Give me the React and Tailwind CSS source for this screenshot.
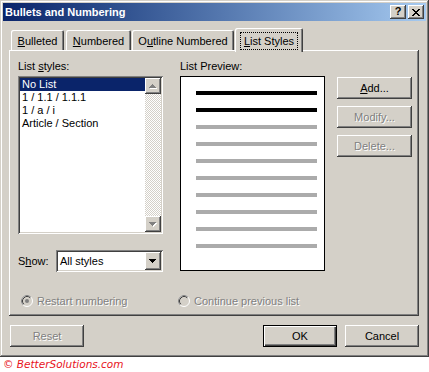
const raised =
  "shadow-[inset_-1px_-1px_#404040,inset_1px_1px_#ffffff,inset_-2px_-2px_#808080]";
const sunken =
  "shadow-[inset_1px_1px_#808080,inset_-1px_-1px_#ffffff,inset_2px_2px_#404040,inset_-2px_-2px_#d4d0c8]";
const disabledText = "text-[#808080] [text-shadow:1px_1px_0_#ffffff]";

function Arrow({ dir = "down", color = "#000000", shadow = false }) {
  const rows = dir === "up" ? [[3, 1], [2, 3], [1, 5], [0, 7]] : [[0, 7], [1, 5], [2, 3], [3, 1]];
  return (
    <svg width="8" height="5" viewBox="0 0 8 5" shapeRendering="crispEdges">
      {shadow &&
        rows.map(([x, w], i) => <rect key={"s" + i} x={x + 1} y={i + 1} width={w} height="1" fill="#ffffff" />)}
      {rows.map(([x, w], i) => (
        <rect key={i} x={x} y={i} width={w} height="1" fill={color} />
      ))}
    </svg>
  );
}

function Radio({ checked }) {
  return (
    <svg width="12" height="12" viewBox="0 0 12 12">
      <circle cx="6" cy="6" r="5.5" fill="#d4d0c8" stroke="#ffffff" />
      <path d="M2.11 9.89 A5.5 5.5 0 0 1 9.89 2.11" fill="none" stroke="#808080" />
      <path d="M2.82 9.18 A4.5 4.5 0 0 1 9.18 2.82" fill="none" stroke="#404040" />
      {checked && <circle cx="6" cy="6" r="2" fill="#808080" />}
    </svg>
  );
}

function Button({ children, className = "", disabled, isDefault }) {
  const frame = isDefault
    ? "shadow-[inset_0_0_0_1px_#000000,inset_2px_2px_#ffffff,inset_-2px_-2px_#404040,inset_-3px_-3px_#808080]"
    : raised;
  return (
    <div
      className={`h-[22px] w-[74px] flex items-center justify-center bg-[#d4d0c8] ${frame} ${
        disabled ? disabledText : "text-black"
      } ${className}`}
    >
      {children}
    </div>
  );
}

function Tab({ children, width, selected, className = "" }) {
  return (
    <div
      className={`flex justify-center bg-[#d4d0c8] rounded-t-[2px] shadow-[inset_1px_1px_#ffffff,inset_-1px_0_#404040,inset_-2px_0_#808080] ${
        selected ? "relative z-10 h-[24px] mb-[-2px] pt-[4px]" : "h-[20px] pt-[5px]"
      } ${className}`}
      style={{ width }}
    >
      {children}
    </div>
  );
}

export default function App() {
  const styles = ["No List", "1 / 1.1 / 1.1.1", "1 / a / i", "Article / Section"];
  return (
    <div className="w-[429px] h-[372px] bg-white font-['Liberation_Sans',Arial,sans-serif] text-[11px] leading-[13px] text-black overflow-hidden">
      <div className="w-[429px] h-[357px] bg-[#d4d0c8] p-[3px] flex flex-col shadow-[inset_-1px_-1px_#404040,inset_1px_1px_#d4d0c8,inset_-2px_-2px_#808080,inset_2px_2px_#ffffff]">
        {/* title bar */}
        <div className="h-[18px] flex items-center bg-linear-to-r from-[#0a246a] to-[#a6caf0] pl-[2px] pr-[2px]">
          <span className="text-white font-bold text-[11px]">Bullets and Numbering</span>
          <div className="flex-1" />
          <div className={`w-[16px] h-[14px] flex items-center justify-center bg-[#d4d0c8] ${raised} font-bold text-[11px] leading-none pb-[1px]`}>
            ?
          </div>
          <div className={`ml-[2px] w-[16px] h-[14px] flex items-center justify-center bg-[#d4d0c8] ${raised}`}>
            <svg width="8" height="7" viewBox="0 0 8 7" shapeRendering="crispEdges">
              {[0, 1, 2, 3, 4, 5, 6].map((i) => (
                <g key={i}>
                  <rect x={i} y={i} width="2" height="1" fill="#000" />
                  <rect x={6 - i} y={i} width="2" height="1" fill="#000" />
                </g>
              ))}
            </svg>
          </div>
        </div>

        {/* tabs */}
        <div className="mt-[7px] ml-[8px] h-[22px] flex items-end">
          <Tab width={53}>
            <span><u>B</u>ulleted</span>
          </Tab>
          <Tab width={65} className="ml-[2px]">
            <span><u>N</u>umbered</span>
          </Tab>
          <Tab width={102} className="ml-[1px]">
            <span>O<u>u</u>tline Numbered</span>
          </Tab>
          <Tab width={68} selected className="ml-[1px]">
            <span className="h-[18px] px-[3px] pt-[2px] border border-dotted border-black">
              <u>L</u>ist Styles
            </span>
          </Tab>
        </div>

        {/* panel */}
        <div className={`ml-[6px] w-[410px] h-[266px] pl-[9px] pt-[10px] pr-[7px] flex flex-col ${raised}`}>
          <div className="flex">
            {/* list styles */}
            <div className="w-[145px] flex flex-col">
              <div className="h-[13px]">
                List <u>s</u>tyles:
              </div>
              <div className={`mt-[3px] h-[158px] bg-white p-[2px] flex ${sunken}`}>
                <div className="flex-1 flex flex-col">
                  {styles.map((s, i) => (
                    <div
                      key={s}
                      className={`h-[13px] pl-[2px] ${i === 0 ? "bg-[#0a246a] text-white" : ""}`}
                    >
                      {s}
                    </div>
                  ))}
                </div>
                <div className="w-[16px] flex flex-col">
                  <div className={`h-[16px] flex items-center justify-center bg-[#d4d0c8] ${raised}`}>
                    <Arrow dir="up" color="#808080" shadow />
                  </div>
                  <div className="flex-1 bg-[repeating-conic-gradient(#d4d0c8_0%_25%,#ffffff_0%_50%)] bg-[length:2px_2px]" />
                  <div className={`h-[16px] flex items-center justify-center bg-[#d4d0c8] ${raised}`}>
                    <Arrow dir="down" color="#808080" shadow />
                  </div>
                </div>
              </div>
              <div className="mt-[16px] h-[22px] flex items-center">
                <span className="w-[38px]">
                  S<u>h</u>ow:
                </span>
                <div className={`flex-1 h-[22px] bg-white p-[2px] flex ${sunken}`}>
                  <div className="flex-1 flex items-center pl-[2px]">All styles</div>
                  <div className={`w-[16px] flex items-center justify-center bg-[#d4d0c8] ${raised}`}>
                    <Arrow dir="down" />
                  </div>
                </div>
              </div>
            </div>

            {/* preview */}
            <div className="ml-[17px] w-[145px] flex flex-col">
              <div className="h-[13px]">List Preview:</div>
              <div className="mt-[3px] h-[195px] bg-white border border-black pt-[14px] pl-[15px] pr-[7px] flex flex-col">
                <div className="h-[4px] bg-black" />
                <div className="mt-[13px] h-[4px] bg-black" />
                {[0, 1, 2, 3, 4, 5, 6, 7].map((i) => (
                  <div key={i} className="mt-[13px] h-[4px] bg-[#ababab]" />
                ))}
              </div>
            </div>

            {/* buttons */}
            <div className="ml-[12px] pt-[17px] flex flex-col gap-[7px]">
              <Button className="w-[75px]">
                <span><u>A</u>dd...</span>
              </Button>
              <Button className="w-[75px]" disabled>
                Modify...
              </Button>
              <Button className="w-[75px]" disabled>
                Delete...
              </Button>
            </div>
          </div>

          {/* radios */}
          <div className="mt-[22px] h-[14px] flex items-center">
            <div className={`ml-[3px] w-[157px] flex items-center gap-[4px] ${disabledText}`}>
              <Radio checked />
              <span>Restart numbering</span>
            </div>
            <div className={`flex items-center gap-[4px] ${disabledText}`}>
              <Radio />
              <span>Continue previous list</span>
            </div>
          </div>
        </div>

        {/* dialog buttons */}
        <div className="mt-[9px] h-[22px] flex">
          <Button className="ml-[7px]" disabled>
            Reset
          </Button>
          <div className="flex-1" />
          <Button isDefault>OK</Button>
          <Button className="ml-[8px] mr-[7px]">Cancel</Button>
        </div>
      </div>
      <div className="h-[15px] pl-[3px] flex items-center font-['DejaVu_Sans',sans-serif] italic text-[10.5px] text-[#e8141c]">
        © BetterSolutions.com
      </div>
    </div>
  );
}
